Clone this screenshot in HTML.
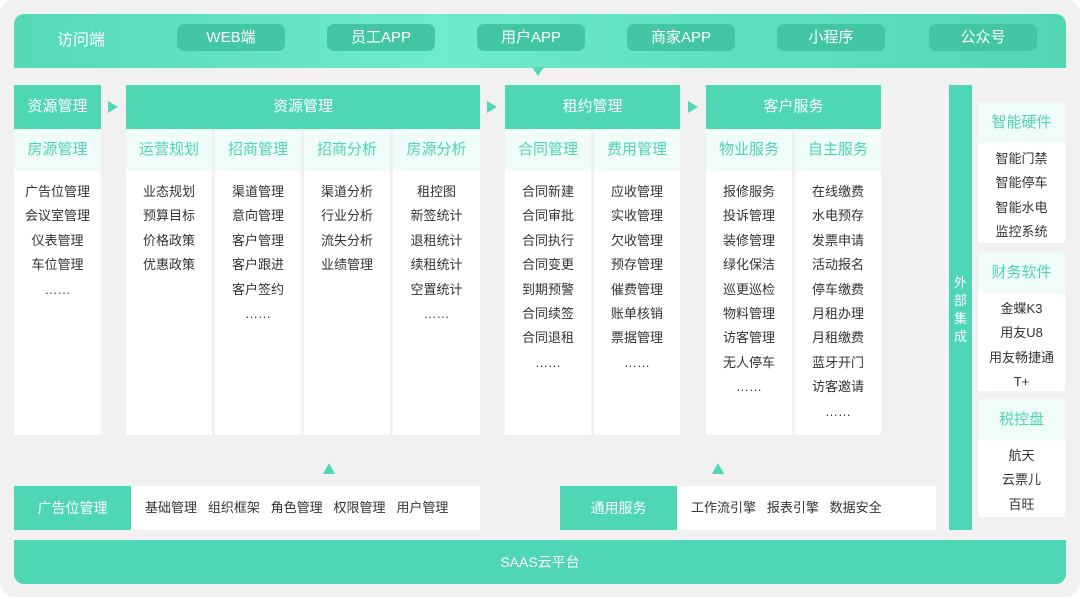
<!DOCTYPE html>
<html><head><meta charset="utf-8"><style>
*{margin:0;padding:0;box-sizing:border-box}
body{width:1080px;height:599px;background:#fff;font-family:"Liberation Sans","Noto Sans CJK SC",sans-serif;position:relative;overflow:hidden}
.a{position:absolute}
.bg{left:0;top:0;width:1080px;height:597px;background:#f1f1f1;border-radius:14px}
.top{left:14px;top:14px;width:1052px;height:54px;background:linear-gradient(90deg,#55d9b6,#6eebcb 40%,#5de0bd 70%,#52d6b4);border-radius:10px 10px 0 0}
.btn{top:24px;width:108px;height:27px;background:#42c7a2;border-radius:7px;color:#fff;font-size:15px;text-align:center;line-height:27px}
.hd{background:#4fd6b4;color:#fff;font-size:15px;text-align:center;line-height:44px;height:44px;top:85px}
.sh{top:129px;height:42px;background:#effcf8;color:#4fd4b3;font-size:15px;text-align:center;line-height:42px}
.bd{top:171px;height:264px;background:#fff;font-size:13px;color:#333;text-align:center;padding-top:9px;line-height:24.4px}
.ar{width:0;height:0;border-top:6px solid transparent;border-bottom:6px solid transparent;border-left:10px solid #4fd6b4;top:101px}
.up{width:0;height:0;border-left:6px solid transparent;border-right:6px solid transparent;border-bottom:11px solid #4fd6b4;top:463px}
.rb{left:978px;width:87px;background:#fff}
.rh{height:41px;background:#effcf8;color:#4fd4b3;font-size:15px;text-align:center;line-height:41px}
.ri{font-size:13px;color:#333;text-align:center;line-height:24.3px;padding-top:4px}
</style></head><body>
<div class="a bg"></div>
<div class="a top"></div>
<div class="a" style="left:532px;top:67px;width:0;height:0;border-left:6px solid transparent;border-right:6px solid transparent;border-top:9px solid #52d6b4"></div>
<div class="a" style="left:57px;top:26px;color:#fff;font-size:16px">访问端</div>
<div class="a btn" style="left:177px">WEB端</div>
<div class="a btn" style="left:327px">员工APP</div>
<div class="a btn" style="left:477px">用户APP</div>
<div class="a btn" style="left:627px">商家APP</div>
<div class="a btn" style="left:777px">小程序</div>
<div class="a btn" style="left:929px">公众号</div>

<div class="a hd" style="left:14px;width:87px">资源管理</div>
<div class="a sh" style="left:14px;width:87px">房源管理</div>
<div class="a bd" style="left:14px;width:87px">广告位管理<br>会议室管理<br>仪表管理<br>车位管理<br>……</div>
<div class="a ar" style="left:108px"></div>

<div class="a hd" style="left:126px;width:354px">资源管理</div>
<div class="a sh" style="left:126px;width:86px">运营规划</div>
<div class="a sh" style="left:215px;width:86px">招商管理</div>
<div class="a sh" style="left:304px;width:86px">招商分析</div>
<div class="a sh" style="left:393px;width:87px">房源分析</div>
<div class="a bd" style="left:126px;width:86px">业态规划<br>预算目标<br>价格政策<br>优惠政策</div>
<div class="a bd" style="left:215px;width:86px">渠道管理<br>意向管理<br>客户管理<br>客户跟进<br>客户签约<br>……</div>
<div class="a bd" style="left:304px;width:86px">渠道分析<br>行业分析<br>流失分析<br>业绩管理</div>
<div class="a bd" style="left:393px;width:87px">租控图<br>新签统计<br>退租统计<br>续租统计<br>空置统计<br>……</div>
<div class="a ar" style="left:487px"></div>

<div class="a hd" style="left:505px;width:175px">租约管理</div>
<div class="a sh" style="left:505px;width:86px">合同管理</div>
<div class="a sh" style="left:594px;width:86px">费用管理</div>
<div class="a bd" style="left:505px;width:86px">合同新建<br>合同审批<br>合同执行<br>合同变更<br>到期预警<br>合同续签<br>合同退租<br>……</div>
<div class="a bd" style="left:594px;width:86px">应收管理<br>实收管理<br>欠收管理<br>预存管理<br>催费管理<br>账单核销<br>票据管理<br>……</div>
<div class="a ar" style="left:688px"></div>

<div class="a hd" style="left:706px;width:175px">客户服务</div>
<div class="a sh" style="left:706px;width:86px">物业服务</div>
<div class="a sh" style="left:795px;width:86px">自主服务</div>
<div class="a bd" style="left:706px;width:86px">报修服务<br>投诉管理<br>装修管理<br>绿化保洁<br>巡更巡检<br>物料管理<br>访客管理<br>无人停车<br>……</div>
<div class="a bd" style="left:795px;width:86px">在线缴费<br>水电预存<br>发票申请<br>活动报名<br>停车缴费<br>月租办理<br>月租缴费<br>蓝牙开门<br>访客邀请<br>……</div>

<div class="a" style="left:949px;top:85px;width:23px;height:445px;background:#4fd6b4;color:#fff;font-size:13px;line-height:18px;text-align:center;padding-top:189px">外<br>部<br>集<br>成</div>

<div class="a rb" style="top:102px;height:141px"><div class="rh">智能硬件</div><div class="ri">智能门禁<br>智能停车<br>智能水电<br>监控系统</div></div>
<div class="a rb" style="top:252px;height:139px"><div class="rh">财务软件</div><div class="ri">金蝶K3<br>用友U8<br>用友畅捷通<br>T+</div></div>
<div class="a rb" style="top:399px;height:118px"><div class="rh">税控盘</div><div class="ri">航天<br>云票儿<br>百旺</div></div>

<div class="a up" style="left:323px"></div>
<div class="a up" style="left:712px"></div>
<div class="a" style="left:14px;top:486px;width:117px;height:44px;background:#4fd6b4;color:#fff;font-size:14px;text-align:center;line-height:44px">广告位管理</div>
<div class="a" style="left:131px;top:486px;width:349px;height:44px;background:#fff;color:#333;font-size:13px;line-height:44px;padding-left:14px;word-spacing:0">基础管理&nbsp;&nbsp;&nbsp;组织框架&nbsp;&nbsp;&nbsp;角色管理&nbsp;&nbsp;&nbsp;权限管理&nbsp;&nbsp;&nbsp;用户管理</div>
<div class="a" style="left:560px;top:486px;width:117px;height:44px;background:#4fd6b4;color:#fff;font-size:14px;text-align:center;line-height:44px">通用服务</div>
<div class="a" style="left:677px;top:486px;width:259px;height:44px;background:#fff;color:#333;font-size:13px;line-height:44px;padding-left:14px">工作流引擎&nbsp;&nbsp;&nbsp;报表引擎&nbsp;&nbsp;&nbsp;数据安全</div>

<div class="a" style="left:14px;top:540px;width:1052px;height:44px;background:#4fd6b4;border-radius:0 0 10px 10px;color:#fff;font-size:14px;text-align:center;line-height:44px">SAAS云平台</div>
</body></html>
